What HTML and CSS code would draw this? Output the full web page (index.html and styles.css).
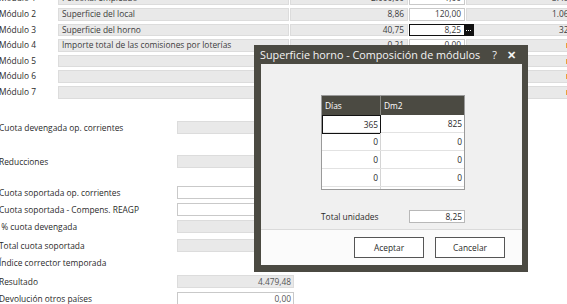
FILE: index.html
```html
<!DOCTYPE html>
<html lang="es">
<head>
<meta charset="utf-8">
<title>Módulos</title>
<link rel="stylesheet" href="styles.css">
</head>
<body>
<div class="screen">
  <div class="modules">
    <div class="mrow">
      <div class="mlabel">Módulo 1</div>
      <div class="cell desc">Personal empleado</div>
      <div class="cell num">2.000,00</div>
      <div class="cell field num">1,00</div>
      <div class="cell num last">3.494,00</div>
    </div>
    <div class="mrow">
      <div class="mlabel">Módulo 2</div>
      <div class="cell desc">Superficie del local</div>
      <div class="cell num">8,86</div>
      <div class="cell field num">120,00</div>
      <div class="cell num last">1.063,20</div>
    </div>
    <div class="mrow">
      <div class="mlabel">Módulo 3</div>
      <div class="cell desc">Superficie del horno</div>
      <div class="cell num">40,75</div>
      <div class="cell field focus num">8,25<span class="ellipsis" aria-label="..."></span></div>
      <div class="cell num last">326,19</div>
    </div>
    <div class="mrow">
      <div class="mlabel">Módulo 4</div>
      <div class="cell desc">Importe total de las comisiones por loterías</div>
      <div class="cell num">0,21</div>
      <div class="cell field num">0,00</div>
      <div class="cell last"><span class="flag"></span></div>
    </div>
    <div class="mrow">
      <div class="mlabel">Módulo 5</div>
      <div class="cell desc"></div>
      <div class="cell num"></div>
      <div class="cell num"></div>
      <div class="cell last"><span class="flag"></span></div>
    </div>
    <div class="mrow">
      <div class="mlabel">Módulo 6</div>
      <div class="cell desc"></div>
      <div class="cell num"></div>
      <div class="cell num"></div>
      <div class="cell last"><span class="flag"></span></div>
    </div>
    <div class="mrow">
      <div class="mlabel">Módulo 7</div>
      <div class="cell desc"></div>
      <div class="cell num"></div>
      <div class="cell num"></div>
      <div class="cell last"><span class="flag"></span></div>
    </div>
  </div>

  <div class="summary">
    <div class="srow s1"><span class="slabel">Cuota devengada op. corrientes</span><span class="sfield ro"></span></div>
    <div class="srow s2"><span class="slabel">Reducciones</span><span class="sfield ro"></span></div>
    <div class="srow s3"><span class="slabel">Cuota soportada op. corrientes</span><span class="sfield"></span></div>
    <div class="srow s4"><span class="slabel">Cuota soportada - Compens. REAGP</span><span class="sfield"></span></div>
    <div class="srow s5"><span class="slabel">&nbsp;% cuota devengada</span><span class="sfield ro"></span></div>
    <div class="srow s6"><span class="slabel">Total cuota soportada</span><span class="sfield ro"></span></div>
    <div class="srow s7"><span class="slabel">Índice corrector temporada</span></div>
    <div class="srow s8"><span class="slabel">Resultado</span><span class="sfield ro">4.479,48</span></div>
    <div class="srow s9"><span class="slabel">Devolución otros países</span><span class="sfield">0,00</span></div>
  </div>

  <div class="dialog" role="dialog">
    <div class="dtitle">
      <span class="dtitle-text">Superficie horno - Composición de módulos</span>
      <span class="dbtn">?</span>
      <span class="dbtn close">✕</span>
    </div>
    <div class="dframe">
      <div class="dbody">
        <div class="grid">
          <div class="ghead">
            <div class="gh c1">Días</div>
            <div class="gh c2">Dm2</div>
          </div>
          <div class="grow"><div class="gc c1 active">365</div><div class="gc c2">825</div></div>
          <div class="grow"><div class="gc c1">0</div><div class="gc c2">0</div></div>
          <div class="grow"><div class="gc c1">0</div><div class="gc c2">0</div></div>
          <div class="grow"><div class="gc c1">0</div><div class="gc c2">0</div></div>
          <div class="grow partial"><div class="gc c1"></div><div class="gc c2"></div></div>
        </div>
        <div class="total">
          <span class="total-label">Total unidades</span>
          <span class="total-box">8,25</span>
        </div>
      </div>
      <div class="dfoot">
        <button class="btn">Aceptar</button>
        <button class="btn">Cancelar</button>
      </div>
    </div>
  </div>
</div>
</body>
</html>
```
FILE: styles.css
```css
* { box-sizing: border-box; margin: 0; padding: 0; }
html, body { width: 567px; height: 304px; overflow: hidden; background: #fff; }
body {
  font-family: "Open Sans", "Noto Sans", sans-serif;
  font-size: 8.4px;
  color: #2a2a2a;
  position: relative;
}
.screen { position: relative; width: 567px; height: 304px; overflow: hidden; }

/* module table */
.modules { display: flex; flex-direction: column; gap: 3px; margin-top: -7.6px; }
.mrow {
  display: grid;
  grid-template-columns: 57px 231px 118px 56px 123px;
  column-gap: 1px;
  height: 12.6px;
}
.mlabel { line-height: 12.6px; text-indent: -1px; white-space: nowrap; color: #2a2a2a; }
.cell {
  background: #e9e9e9;
  border: 1px solid #dcdcdc;
  line-height: 10.6px;
  padding: 0 3px;
  white-space: nowrap;
  overflow: hidden;
  color: #3c3c3c;
}
.num { text-align: right; }
.field { background: #fff; border-color: #c9c9c9; position: relative; overflow: visible; }
.focus { border-color: #111; }
.ellipsis {
  position: absolute;
  right: -10px;
  top: -1px;
  width: 10px;
  height: 12.6px;
  background: #111;
}
.ellipsis::before {
  content: "";
  position: absolute;
  left: 2px;
  top: 6px;
  width: 1px;
  height: 1px;
  background: #fff;
  box-shadow: 2px 0 #fff, 4px 0 #fff;
}
.last { padding-right: 3px; }
.flag {
  display: inline-block;
  margin-left: 96px;
  width: 2px;
  height: 5px;
  margin-top: 3px;
  background: #e9a23b;
  vertical-align: top;
}

/* summary */
.summary { display: flex; flex-direction: column; }
.srow { display: grid; grid-template-columns: 177px 117px; height: 13px; }
.slabel { line-height: 13px; text-indent: -1px; white-space: nowrap; color: #2a2a2a; }
.sfield {
  border: 1px solid #c9c9c9;
  background: #fff;
  line-height: 11px;
  text-align: right;
  padding-right: 2px;
  color: #555;
}
.sfield.ro { background: #e9e9e9; border-color: #dcdcdc; }
.s1 { margin-top: 22.4px; }
.s2 { margin-top: 21px; }
.s3 { margin-top: 18px; }
.s4 { margin-top: 4px; }
.s5 { margin-top: 4px; }
.s6 { margin-top: 6px; }
.s7 { margin-top: 4px; }
.s8 { margin-top: 6px; }
.s9 { margin-top: 4px; }

/* dialog */
.dialog {
  position: absolute;
  left: 254px;
  top: 45px;
  width: 274px;
  height: 227px;
  background: #4b4a42;
  display: flex;
  flex-direction: column;
}
.dtitle {
  height: 19px;
  display: flex;
  align-items: center;
  padding-left: 6px;
  color: #f4f4f4;
  font-size: 10.8px;
}
.dtitle-text { flex: 1; white-space: nowrap; }
.dbtn { width: 17px; text-align: center; font-size: 10.8px; }
.close { font-size: 10.5px; margin-right: 8px; font-weight: bold; }
.dframe {
  flex: 1;
  display: flex;
  flex-direction: column;
  padding: 0 6px 7px 7px;
}
.dbody {
  flex: 1;
  background: #f0f0f0;
  padding: 31px 0 0 60px;
}
.grid {
  width: 144px;
  height: 95px;
  border: 1px solid #9a9a9a;
  background: #fff;
  overflow: hidden;
}
.ghead { display: grid; grid-template-columns: 59px 83px; height: 19px; background: #4b4a42; }
.gh { color: #fff; line-height: 19px; padding-left: 3px; }
.gh.c1 { border-right: 1px solid #8a8a84; }
.grow {
  display: grid;
  grid-template-columns: 59px 83px;
  height: 18px;
  border-bottom: 1px solid #e2e2e2;
}
.gc { text-align: right; line-height: 17px; padding-right: 2px; color: #2a2a2a; }
.gc.c1 { border-right: 1px solid #d4d4d4; }
.gc.active { border: 1px solid #111; }
.total {
  display: grid;
  grid-template-columns: 88px 56px;
  margin-top: 20px;
  height: 13px;
  align-items: center;
}
.total-label { color: #2a2a2a; white-space: nowrap; }
.total-box {
  height: 13px;
  border: 1px solid #b8b8b8;
  background: #fff;
  text-align: right;
  line-height: 11px;
  padding-right: 2px;
}
.dfoot {
  height: 36px;
  background: #fbfbfb;
  border-top: 1px solid #dadada;
  display: flex;
  justify-content: flex-end;
  gap: 11px;
  padding: 7px 17px 0 0;
}
.btn {
  width: 70px;
  height: 21px;
  border: 1px solid #555;
  background: #fff;
  font-family: inherit;
  font-size: 8.4px;
  color: #2a2a2a;
}
```
